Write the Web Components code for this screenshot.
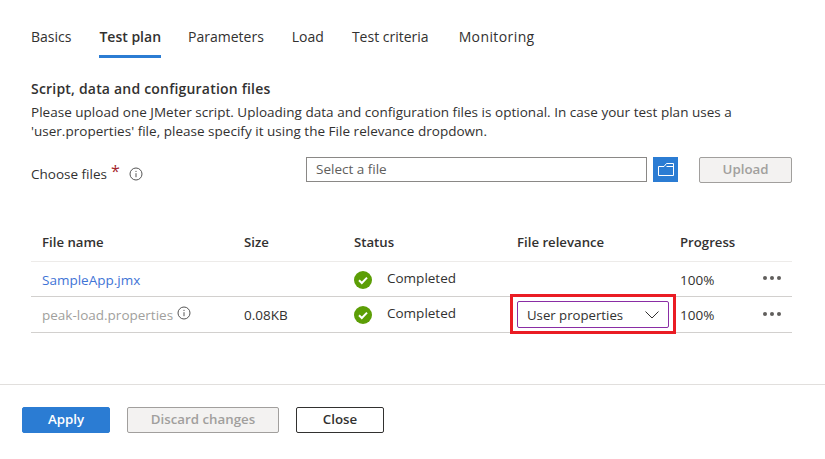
<!DOCTYPE html>
<html>
<head>
<meta charset="utf-8">
<style>
  html, body { margin: 0; padding: 0; background: #fff; }
  body { font-family: "Open Sans", "Noto Sans", sans-serif; font-size: 13.5px; color: #323130; }
</style>
</head>
<body>
<test-page>
  <tab-bar slot="tabs" active="Test plan" tabs="Basics,Test plan,Parameters,Load,Test criteria,Monitoring"></tab-bar>
  <upload-section slot="body"></upload-section>
  <file-table slot="body"></file-table>
  <action-bar slot="footer"></action-bar>
</test-page>

<script>
const INFO_ICON = `<svg width="14" height="14" viewBox="0 0 14 14" fill="none" stroke="#555"><circle cx="7" cy="7" r="6"/><path d="M7 6.2v4M7 3.9v1.1"/></svg>`;
const CHECK_ICON = `<svg width="18" height="18" viewBox="0 0 18 18"><circle cx="9" cy="9" r="9" fill="#5c9e06"/><path d="M5 9.2l2.8 2.8L13 6.6" fill="none" stroke="#fff" stroke-width="2"/></svg>`;

class TestPage extends HTMLElement {
  constructor() {
    super();
    this.attachShadow( { mode: 'open' } );
    this.shadowRoot.innerHTML = `
      <style>
        :host { display: flex; flex-direction: column; height: 459px; overflow: hidden; }
        .main { flex: 1; padding: 0 33px 0 31px; }
        .footer { border-top: 1px solid #e1dfdd; height: 75px; box-sizing: border-box; }
      </style>
      <div class="main">
        <slot name="tabs"></slot>
        <slot name="body"></slot>
      </div>
      <div class="footer"><slot name="footer"></slot></div>
    `;
  }
}
customElements.define( 'test-page', TestPage );

class TabBar extends HTMLElement {
  constructor() {
    super();
    this.attachShadow( { mode: 'open' } );
  }
  connectedCallback() {
    const active = this.getAttribute( 'active' );
    const items = this.getAttribute( 'tabs' ).split( ',' ).map( t =>
      `<div class="tab${t === active ? ' active' : ''}">${t}</div>` ).join( '' );
    this.shadowRoot.innerHTML = `
      <style>
        :host { display: block; padding-top: 27px; }
        .tabs { display: flex; gap: 28px; }
        .tab { font-size: 14px; line-height: 20px; height: 31px; box-sizing: border-box; color: #323130; }
        .tab:nth-child(3) { margin-left: -1px; }
        .tab:nth-child(6) { margin-left: 2px; letter-spacing: .4px; }
        .active { font-weight: 600; border-bottom: 3px solid #2b7cd3; }
      </style>
      <div class="tabs">${items}</div>
    `;
  }
}
customElements.define( 'tab-bar', TabBar );

class UploadSection extends HTMLElement {
  constructor() {
    super();
    this.attachShadow( { mode: 'open' } );
    this.shadowRoot.innerHTML = `
      <style>
        :host { display: block; padding-top: 21px; }
        h2 { margin: 0; font-size: 14px; line-height: 19px; font-weight: 600; letter-spacing: .2px; color: #323130; }
        p { margin: 5px 0 0; line-height: 19px; width: 740px; letter-spacing: .02px; }
        .row { display: flex; margin-top: 16px; align-items: flex-start; }
        .label { width: 275px; padding-top: 7px; display: flex; align-items: center; line-height: 20px; }
        .req { color: #a4262c; margin: -6px 9px 0 4px; font-size: 16px; line-height: 14px; }
        .label svg { display: block; }
        .input { width: 341px; height: 25px; box-sizing: border-box; border: 1px solid #8a8886; padding: 0 9px; line-height: 22px; color: #605e5c; }
        .pick { width: 25px; height: 25px; margin-left: 6px; background: #2b7cd3; display: flex; align-items: center; justify-content: center; }
        .pick svg { display: block; margin-top: -1px; }
        .upload { margin-left: 21px; }
      </style>
      <h2>Script, data and configuration files</h2>
      <p>Please upload one JMeter script. Uploading data and configuration files is optional. In case your test plan uses a 'user.properties' file, please specify it using the File relevance dropdown.</p>
      <div class="row">
        <div class="label">Choose files<span class="req">*</span>${INFO_ICON}</div>
        <div class="input">Select a file</div>
        <div class="pick"><svg width="16" height="13" viewBox="0 0 16 13" fill="none" stroke="#fff"><path d="M.5 3.5V12.5H15.5V.5H8.5L6 3.5H.5ZM8.5 3.5H15.5"/></svg></div>
        <az-button class="upload" kind="disabled" width="93" label="Upload"></az-button>
      </div>
    `;
  }
}
customElements.define( 'upload-section', UploadSection );

class AzButton extends HTMLElement {
  constructor() {
    super();
    this.attachShadow( { mode: 'open' } );
  }
  connectedCallback() {
    this.shadowRoot.innerHTML = `
      <style>
        :host { display: block; }
        div { width: ${this.getAttribute( 'width' )}px; height: 26px; box-sizing: border-box; border-radius: 2px; border: 1px solid; padding-bottom: 3px; display: flex; align-items: center; justify-content: center; font-size: 13.3px; font-weight: 600; }
        .primary { background: #2b7cd3; border-color: #2b7cd3; color: #fff; }
        .disabled { background: #f3f2f1; border-color: #a19f9d; color: #a19f9d; }
        .default { background: #fff; border-color: #323130; color: #323130; }
      </style>
      <div class="${this.getAttribute( 'kind' )}">${this.getAttribute( 'label' )}</div>
    `;
  }
}
customElements.define( 'az-button', AzButton );

class FileTable extends HTMLElement {
  constructor() {
    super();
    this.attachShadow( { mode: 'open' } );
    this.shadowRoot.innerHTML = `
      <style>
        :host { display: block; margin-top: 39px; }
        .row { display: grid; grid-template-columns: 202px 110px 163px 163px 82px 30px; padding-left: 11px; align-items: center; height: 35px; border-bottom: 1px solid #d2d0ce; box-sizing: border-box; }
        .row > * { min-width: 0; }
        .head { height: 39px; font-size: 13.2px; font-weight: 600; border-bottom-color: #edebe9; padding-bottom: 1px; }
        .last { height: 36px; }
        .link { color: #3f74d6; }
        .low { margin-top: 2px; }
        .muted { color: #a19f9d; display: flex; align-items: center; gap: 4px; white-space: nowrap; }
        .muted svg { display: block; margin-top: -3px; }
        .status { display: flex; align-items: center; gap: 15px; }
        .status svg { display: block; flex: none; margin-top: 1px; }
        .status span { margin-top: -3px; }
        .more { display: flex; gap: 3px; margin-top: -2px; padding-left: 1px; }
        .more i { width: 4px; height: 4px; border-radius: 50%; background: #605e5c; }
        .drop { position: relative; width: 152px; height: 27px; box-sizing: border-box; border: 1px solid #8a2da5; border-radius: 2px; display: flex; align-items: center; justify-content: space-between; padding: 0 9px; font-size: 13.2px; }
        .drop::after { content: ''; position: absolute; left: -8px; top: -8px; width: 160px; height: 34px; border: 3px solid #ea1c24; }
      </style>
      <div class="row head"><div>File name</div><div>Size</div><div>Status</div><div>File relevance</div><div>Progress</div><div></div></div>
      <div class="row">
        <div class="link low">SampleApp.jmx</div><div></div>
        <div class="status">${CHECK_ICON}<span>Completed</span></div><div></div>
        <div class="low">100%</div><div class="more"><i></i><i></i><i></i></div>
      </div>
      <div class="row last">
        <div class="muted">peak-load.properties ${INFO_ICON}</div><div>0.08KB</div>
        <div class="status">${CHECK_ICON}<span>Completed</span></div>
        <div><div class="drop">User properties<svg width="14" height="8" viewBox="0 0 14 8" fill="none" stroke="#323130"><path d="M.5.5L7 7l6.5-6.5"/></svg></div></div>
        <div>100%</div><div class="more"><i></i><i></i><i></i></div>
      </div>
    `;
  }
}
customElements.define( 'file-table', FileTable );

class ActionBar extends HTMLElement {
  constructor() {
    super();
    this.attachShadow( { mode: 'open' } );
    this.shadowRoot.innerHTML = `
      <style>
        :host { display: flex; gap: 17px; padding: 22px 0 0 22px; }
      </style>
      <az-button kind="primary" width="88" label="Apply"></az-button>
      <az-button kind="disabled" width="152" label="Discard changes"></az-button>
      <az-button kind="default" width="88" label="Close"></az-button>
    `;
  }
}
customElements.define( 'action-bar', ActionBar );
</script>
</body>
</html>
